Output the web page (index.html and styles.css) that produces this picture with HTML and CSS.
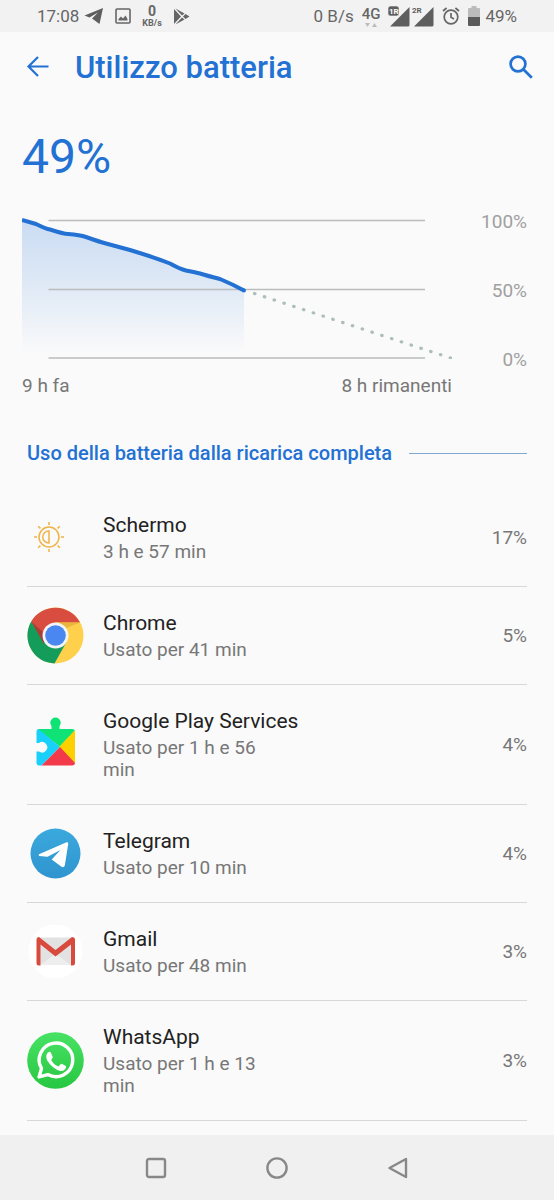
FILE: index.html
```html
<!DOCTYPE html>
<html lang="it">
<head>
  <meta charset="UTF-8" />
  <meta name="viewport" content="width=device-width, initial-scale=1.0" />
  <title>Utilizzo batteria</title>
  <link rel="stylesheet" href="styles.css">
</head>
<body>

  <!-- Status bar -->
  <div class="status-bar">
    <div class="status-left">
      <span>17:08</span>
      <svg class="status-plane" width="20" height="18" viewBox="0 0 20 18"><path d="M19 1 L0.5 8.6 L5.5 10.6 L14 5.5 L8 11.5 L15.5 17 Z" fill="#5e5e5e"/></svg>
      <svg width="16" height="16" viewBox="0 0 16 16"><rect x="1" y="1" width="14" height="14" rx="1" fill="none" stroke="#666" stroke-width="1.6"/><path d="M3.5 12.5 V11 L6 8.5 L8 10.5 L10.5 7.5 L12.5 11 V12.5 Z" fill="#666"/></svg>
      <div class="net-speed"><b>0</b><small>KB/s</small></div>
      <svg width="17" height="17" viewBox="0 0 17 17"><path d="M1 1 V16 L8 8.5 Z M2.5 0.5 L9 7.5 L11.5 5.5 Z M2.5 16.5 L9 9.5 L11.5 11.5 Z M10 8.5 L12.5 6 L16.5 8.5 L12.5 11 Z" fill="#666"/></svg>
    </div>
    <div class="status-right">
      <span>0 B/s</span>
      <div class="net-type">
        <b>4G</b>
        <svg width="14" height="4" viewBox="0 0 14 4"><path d="M1 0 H6 L3.5 4 Z M8 4 H13 L10.5 0 Z" fill="#bbb"/></svg>
      </div>
      <div class="signals">
        <svg width="22" height="21" viewBox="0 0 22 21">
          <path d="M21.5 1 V19 Q21.5 20.5 20 20.5 H2 Z" fill="#5e5e5e"/>
          <rect x="0" y="0" width="11" height="10" rx="2.5" fill="#5e5e5e" stroke="#f2f2f2" stroke-width="0.6"/>
          <text x="1" y="8" class="sim-label sim-active">1R</text>
        </svg>
        <svg width="22" height="21" viewBox="0 0 22 21">
          <path d="M21.5 1 V19 Q21.5 20.5 20 20.5 H2 Z" fill="#5e5e5e"/>
          <text x="0" y="7" class="sim-label">2R</text>
        </svg>
      </div>
      <svg width="18" height="18" viewBox="0 0 18 18" fill="none" stroke="#666" stroke-width="1.7"><circle cx="9" cy="10" r="6.8"/><path d="M9 6 V10.3 L12 12 M1 4 L4.6 1 M17 4 L13.4 1"/></svg>
      <div class="battery">
        <svg width="12" height="20" viewBox="0 0 12 20"><path d="M3.5 0 H8.5 V2 H11 Q12 2 12 3 V11 H0 V3 Q0 2 1 2 H3.5 Z" fill="#bbb"/><path d="M0 11 H12 V19 Q12 20 11 20 H1 Q0 20 0 19 Z" fill="#5a5a5a"/></svg>
        <span>49%</span>
      </div>
    </div>
  </div>

  <!-- Header -->
  <header class="app-bar">
    <button class="icon-btn" aria-label="Indietro">
      <svg width="24" height="24" viewBox="0 0 24 24" fill="none" stroke="#2271d3" stroke-width="2.2"><path d="M12 2 L2.5 11.5 L12 21 M2.5 11.5 H22.5"/></svg>
    </button>
    <h1>Utilizzo batteria</h1>
    <button class="icon-btn" aria-label="Cerca">
      <svg width="24" height="24" viewBox="0 0 24 24" fill="none" stroke="#2271d3" stroke-width="2.7"><circle cx="9" cy="9" r="7.4"/><path d="M14.3 14.3 L22.8 22.8"/></svg>
    </button>
  </header>

  <main>
    <!-- Battery chart -->
    <section class="summary">
      <p class="level">49%</p>
      <div class="chart">
        <div class="plot">
          <svg class="graph" viewBox="0 0 430 144">
            <defs>
              <linearGradient id="fade" x1="0" y1="0" x2="0" y2="1">
                <stop offset="0" stop-color="#1f70d8" stop-opacity="0.22"/>
                <stop offset="0.5" stop-color="#1f70d8" stop-opacity="0.12"/>
                <stop offset="1" stop-color="#1f70d8" stop-opacity="0"/>
              </linearGradient>
            </defs>
            <path d="M0 5 L14 9 L26 14 L43 19 L58 21 L72 25 L80 28 L108 36 L130 43 L150 50 L160 54 L175 58 L195 64 L207 69 L222 75 V139 H0 Z" fill="url(#fade)"/>
            <path d="M26.5 5.5 H403 M26.5 74.5 H403 M26.5 143 H403" stroke="#bbbcbd" stroke-width="1.5"/>
            <path d="M0 5 L14 9 Q24 14 28 14.5 Q42 19 46 19 Q58 20 64 22 Q78 27 84 28.5 L108 35 Q134 43 148 48.5 Q158 54 164 55.5 Q172 57 178 58.5 Q186 61 198 64 Q210 69 222 75.5" fill="none" stroke="#2271d3" stroke-width="4" stroke-linejoin="round"/>
            <circle cx="222" cy="75.5" r="2" fill="#2271d3"/>
            <path d="M232.5 78.5 L428.5 143" fill="none" stroke="#adbdba" stroke-width="3.2" stroke-linecap="round" stroke-dasharray="0.5 9.8"/>
          </svg>
          <div class="times"><span>9 h fa</span><span>8 h rimanenti</span></div>
        </div>
        <div class="scale"><span>100%</span><span>50%</span><span>0%</span></div>
      </div>
    </section>

    <!-- App list -->
    <section class="usage">
      <div class="section-title"><h2>Uso della batteria dalla ricarica completa</h2></div>
      <ul class="apps">
        <li>
          <div class="icon icon-screen">
            <svg width="30" height="30" viewBox="0 0 30 30" fill="none" stroke="#efb346" stroke-width="1.5"><circle cx="15" cy="15" r="10"/><path d="M15 9 V21 C11.5 21 8.7 18.5 8.7 15 C8.7 11.5 11.5 9 15 9 Z M15 0 V3 M15 27 V30 M0 15 H3 M27 15 H30 M4.2 4.2 L6.4 6.4 M23.6 23.6 L25.8 25.8 M4.2 25.8 L6.4 23.6 M23.6 6.4 L25.8 4.2"/></svg>
          </div>
          <div class="info"><h3>Schermo</h3><p>3 h e 57 min</p></div>
          <span class="percent">17%</span>
        </li>
        <li>
          <div class="icon">
            <svg width="57" height="57" viewBox="0 0 57 57">
              <circle cx="28.5" cy="28.5" r="28" fill="#ffd04b"/>
              <path d="M4.2 14.5 A28 28 0 0 1 53 15.5 H28.5 L17.5 35 Z" fill="#d94c40"/>
              <path d="M4.2 14.5 A28 28 0 0 0 27.5 56.5 L39.5 35 L17.3 35 Z" fill="#149d5a"/>
              <path d="M28.5 15.5 H53 L39 21 Z" fill="#e9b53c"/>
              <path d="M4.2 14.5 L17 37 L18 27 Z" fill="#a83e35"/>
              <circle cx="28.5" cy="28.5" r="13" fill="#f4f4f4"/>
              <circle cx="28.5" cy="28.5" r="10.3" fill="#4a87f0"/>
            </svg>
          </div>
          <div class="info"><h3>Chrome</h3><p>Usato per 41 min</p></div>
          <span class="percent">5%</span>
        </li>
        <li>
          <div class="icon">
            <svg width="57" height="57" viewBox="0 0 57 57">
              <clipPath id="puzzle"><path d="M12 13 H24.5 V10 A5.2 5.2 0 1 1 32.5 10 V13 H45 Q48 13 48 16 V46.5 Q48 49.5 45 49.5 H12 Q9.5 49.5 9.5 46.5 V35.5 H12 A5.2 5.2 0 1 0 12 27 H9.5 V16 Q9.5 13 12 13 Z"/></clipPath>
              <g clip-path="url(#puzzle)">
                <path d="M9 0 H49 V13 L33 31 L9 12 Z" fill="#0fe376"/>
                <path d="M9 11 L33 31 L14 50 H9 Z" fill="#18d0fa"/>
                <path d="M49 13 V49 L32 31 Z" fill="#fdd000"/>
                <path d="M14 50 L33 31 L49 48 V50 Z" fill="#f23a4b"/>
              </g>
            </svg>
          </div>
          <div class="info"><h3>Google Play Services</h3><p>Usato per 1 h e 56 min</p></div>
          <span class="percent">4%</span>
        </li>
        <li>
          <div class="icon">
            <svg width="57" height="57" viewBox="0 0 57 57">
              <defs><linearGradient id="tg" x1="0" y1="0" x2="0" y2="1"><stop offset="0" stop-color="#3ba9dd"/><stop offset="1" stop-color="#2f94cf"/></linearGradient></defs>
              <circle cx="28.5" cy="28.5" r="25" fill="url(#tg)"/>
              <path d="M12 29.3 L39.5 17.3 Q41.5 16.8 41.2 19 L37.8 40.5 Q37 43.2 34.5 41.8 L24.7 34.5 L33.5 25 L20.5 31.7 L12.5 31 Q10.8 30.2 12 29.3 Z" fill="#fff"/>
            </svg>
          </div>
          <div class="info"><h3>Telegram</h3><p>Usato per 10 min</p></div>
          <span class="percent">4%</span>
        </li>
        <li>
          <div class="icon">
            <svg width="57" height="57" viewBox="0 0 57 57">
              <circle cx="28.5" cy="28.5" r="27" fill="#fff"/>
              <path d="M12 14.5 H45 V42 H12 Z" fill="#e2e2e2"/>
              <path d="M13 42 L28.5 31 L44 42 Z" fill="#eee"/>
              <path d="M9.5 16 Q10 14 12 14 L28.5 27 L45 14 Q47.5 14 48 16 V40 Q48 42.5 45.5 42.5 H44 V21.5 L28.5 33.5 L13.5 21.5 V42.5 H11.5 Q9.5 42.5 9.5 40 Z" fill="#d84a3e"/>
            </svg>
          </div>
          <div class="info"><h3>Gmail</h3><p>Usato per 48 min</p></div>
          <span class="percent">3%</span>
        </li>
        <li>
          <div class="icon">
            <svg width="57" height="57" viewBox="0 0 57 57">
              <defs><linearGradient id="wa" x1="0" y1="0" x2="0" y2="1"><stop offset="0" stop-color="#48e264"/><stop offset="1" stop-color="#27c741"/></linearGradient></defs>
              <circle cx="28.5" cy="28.5" r="28.3" fill="url(#wa)"/>
              <path d="M12 44.9 L14.5 36.4 A16.8 16.8 0 1 1 20.9 42.6 Z" fill="none" stroke="#fff" stroke-width="3.4" stroke-linejoin="round"/>
              <path d="M20.8 20.5 Q23 18.6 24 21 L25.7 24.8 Q26 26 24.2 28 Q27 33 31.5 34.5 L33.5 32.3 Q34 31.5 35.2 32.1 L38.8 33.9 Q39.5 34.5 38.7 36.5 Q37 39.2 33.5 39 Q25.5 37.2 20.2 28.6 Q18 23.8 20.8 20.5 Z" fill="#fff"/>
            </svg>
          </div>
          <div class="info"><h3>WhatsApp</h3><p>Usato per 1 h e 13 min</p></div>
          <span class="percent">3%</span>
        </li>
      </ul>
    </section>
  </main>

  <!-- Navigation bar -->
  <nav class="nav-bar">
    <button aria-label="Recenti"><svg width="22" height="22" viewBox="0 0 22 22"><rect x="2" y="2" width="18" height="18" rx="2"/></svg></button>
    <button aria-label="Home"><svg width="22" height="22" viewBox="0 0 22 22"><circle cx="11" cy="11" r="9.6"/></svg></button>
    <button aria-label="Indietro"><svg width="22" height="22" viewBox="0 0 22 22"><path d="M19 2 V20 L2.5 11 Z"/></svg></button>
  </nav>

</body>
</html>
```
FILE: styles.css
```css
* {
  box-sizing: border-box;
  margin: 0;
  padding: 0;
}

body {
  background-color: #fafafa;
  color: #777;
  font-family: Roboto, sans-serif;
  min-height: 100vh;
  display: flex;
  flex-direction: column;
}

svg {
  display: block;
  flex-shrink: 0;
}

button {
  background: none;
  border: none;
  cursor: pointer;
}

.status-bar {
  height: 32px;
  padding: 0 37px;
  background-color: #f2f2f2;
  color: #666;
  font-size: 17px;
  display: flex;
  justify-content: space-between;
  align-items: center;
}

.status-left {
  display: flex;
  align-items: center;
  gap: 11px;
}

.status-plane {
  margin-left: -6px;
}

.status-right {
  display: flex;
  align-items: center;
  gap: 8px;
}

.net-speed,
.net-type {
  display: flex;
  flex-direction: column;
  align-items: center;
}

.net-speed b {
  font-size: 14px;
  line-height: 14px;
}

.net-speed small {
  font-size: 9px;
  font-weight: bold;
  line-height: 10px;
}

.net-type b {
  font-size: 15px;
  font-weight: 500;
  line-height: 17px;
}

.signals {
  display: flex;
  gap: 2px;
}

.sim-label {
  font-size: 8px;
  font-weight: bold;
  fill: #5e5e5e;
}

.sim-active {
  fill: #fff;
}

.battery {
  display: flex;
  align-items: center;
  gap: 5px;
}

.app-bar {
  height: 70px;
  padding: 0 21px 0 26px;
  display: flex;
  align-items: center;
}

.icon-btn {
  height: 28px;
}

.app-bar h1 {
  flex: 1;
  margin-left: 25px;
  color: #2271d3;
  font-size: 31px;
  font-weight: 500;
}

.summary {
  padding: 27px 27px 0 22px;
}

.level {
  color: #2271d3;
  font-size: 48px;
  line-height: 56px;
}

.chart {
  display: flex;
  margin-top: 30px;
}

.plot {
  flex: 1;
}

.graph {
  width: 100%;
}

.times {
  display: flex;
  justify-content: space-between;
  margin-top: 16px;
  font-size: 19px;
  line-height: 22px;
}

.scale {
  width: 75px;
  height: 160px;
  display: flex;
  flex-direction: column;
  justify-content: space-between;
  text-align: right;
  color: #a0a0a0;
  font-size: 19px;
  line-height: 22px;
  margin-top: -4px;
}

.usage {
  padding: 0 27px;
}

.section-title {
  display: flex;
  align-items: center;
  gap: 17px;
  margin: 42px 0 22px;
}

.section-title::after {
  content: "";
  flex: 1;
  height: 1px;
  background-color: #7fa9d0;
}

.section-title h2 {
  color: #2271d3;
  font-size: 20px;
  font-weight: 500;
  line-height: 28px;
}

.apps {
  list-style: none;
}

.apps li {
  display: flex;
  align-items: center;
  padding: 22px 0 23px;
  border-bottom: 1px solid #d6d9d8;
}

.icon {
  width: 57px;
  height: 50px;
  margin-right: 19px;
  display: flex;
  align-items: center;
}

.icon-screen {
  padding-left: 7px;
}

.info {
  flex: 1;
}

.info h3 {
  margin-bottom: 2px;
  color: #222;
  font-size: 21px;
  font-weight: 400;
  line-height: 28px;
}

.info p {
  max-width: 180px;
  font-size: 19px;
  line-height: 22px;
}

.percent {
  font-size: 19px;
}

.nav-bar {
  height: 65px;
  margin-top: auto;
  padding: 0 96px;
  background-color: #f0f0f0;
  display: flex;
}

.nav-bar button {
  flex: 1;
  display: flex;
  align-items: center;
  justify-content: center;
}

.nav-bar svg {
  fill: none;
  stroke: #888;
  stroke-width: 2.4px;
  stroke-linejoin: round;
}
```
